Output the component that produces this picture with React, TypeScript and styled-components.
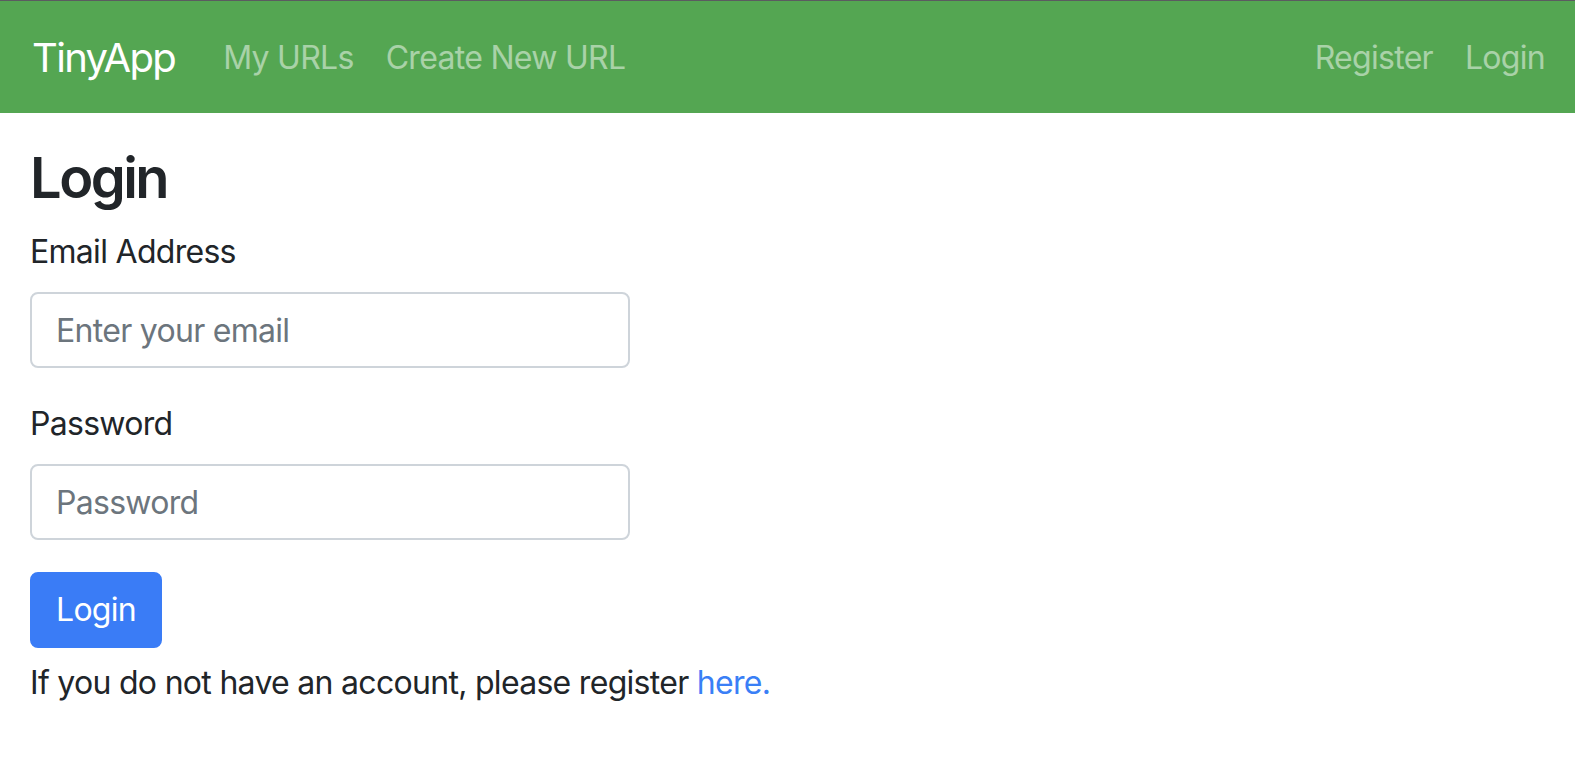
import React from "react";
import styled, { createGlobalStyle } from "styled-components";

const GlobalStyle = createGlobalStyle`
  * { box-sizing: border-box; }
  body {
    margin: 0;
    background: #ffffff;
    color: #212529;
    font-family: Inter, "Noto Sans", Roboto, sans-serif;
    font-size: 32px;
    line-height: 1.5;
    letter-spacing: -0.022em;
  }
`;

const Navbar = styled.nav`
  display: flex;
  align-items: center;
  height: 113px;
  padding: 2px 14px 0 32px;
  background: #54a652;
  border-top: 1px solid #5b5b60;
`;

const Brand = styled.a`
  color: #ffffff;
  font-size: 40px;
  line-height: 60px;
  letter-spacing: -0.042em;
  padding: 10px 0;
  margin-right: 32px;
  text-decoration: none;
  white-space: nowrap;
`;

const NavList = styled.div<{ $right?: boolean }>`
  display: flex;
  align-items: center;
  margin-left: ${(p) => (p.$right ? "auto" : "0")};
`;

const NavLink = styled.a`
  color: rgba(255, 255, 255, 0.5);
  font-size: 32px;
  line-height: 48px;
  padding: 16px 16px;
  text-decoration: none;
  white-space: nowrap;
`;

const Main = styled.main`
  padding: 0 30px;
`;

const Heading = styled.h2`
  margin: 32px 0 16px;
  font-size: 56px;
  font-weight: 600;
  line-height: 1.2;
  letter-spacing: -0.045em;
  color: #212529;
`;

const Form = styled.form`
  width: 600px;
`;

const FormGroup = styled.div`
  margin-bottom: 32px;
`;

const Label = styled.label`
  display: block;
  margin-bottom: 16px;
  font-size: 32px;
  line-height: 48px;
`;

const Input = styled.input`
  display: block;
  width: 100%;
  height: 76px;
  padding: 12px 24px;
  font-family: inherit;
  font-size: 32px;
  line-height: 48px;
  letter-spacing: inherit;
  color: #495057;
  background: #ffffff;
  border: 2px solid #ced4da;
  border-radius: 8px;
  outline: none;
  &::placeholder {
    color: #6c757d;
  }
`;

const Button = styled.button`
  display: block;
  height: 76px;
  padding: 12px 24px;
  font-family: inherit;
  font-size: 32px;
  line-height: 48px;
  letter-spacing: inherit;
  color: #ffffff;
  background: #3a7cf6;
  border: 2px solid #3a7cf6;
  border-radius: 8px;
  cursor: pointer;
`;

const Note = styled.p`
  margin: 11px 0 0;
  font-size: 32px;
  line-height: 48px;
`;

const TextLink = styled.a`
  color: #3a7ff6;
  text-decoration: none;
`;

export default function App() {
  return (
    <>
      <GlobalStyle />
      <Navbar>
        <Brand href="#">TinyApp</Brand>
        <NavList>
          <NavLink href="#">My URLs</NavLink>
          <NavLink href="#">Create New URL</NavLink>
        </NavList>
        <NavList $right>
          <NavLink href="#">Register</NavLink>
          <NavLink href="#">Login</NavLink>
        </NavList>
      </Navbar>
      <Main>
        <Heading>Login</Heading>
        <Form onSubmit={(e) => e.preventDefault()}>
          <FormGroup>
            <Label htmlFor="email">Email Address</Label>
            <Input id="email" type="email" placeholder="Enter your email" />
          </FormGroup>
          <FormGroup>
            <Label htmlFor="password">Password</Label>
            <Input id="password" type="password" placeholder="Password" />
          </FormGroup>
          <Button type="submit">Login</Button>
        </Form>
        <Note>
          If you do not have an account, please register <TextLink href="#">here.</TextLink>
        </Note>
      </Main>
    </>
  );
}
